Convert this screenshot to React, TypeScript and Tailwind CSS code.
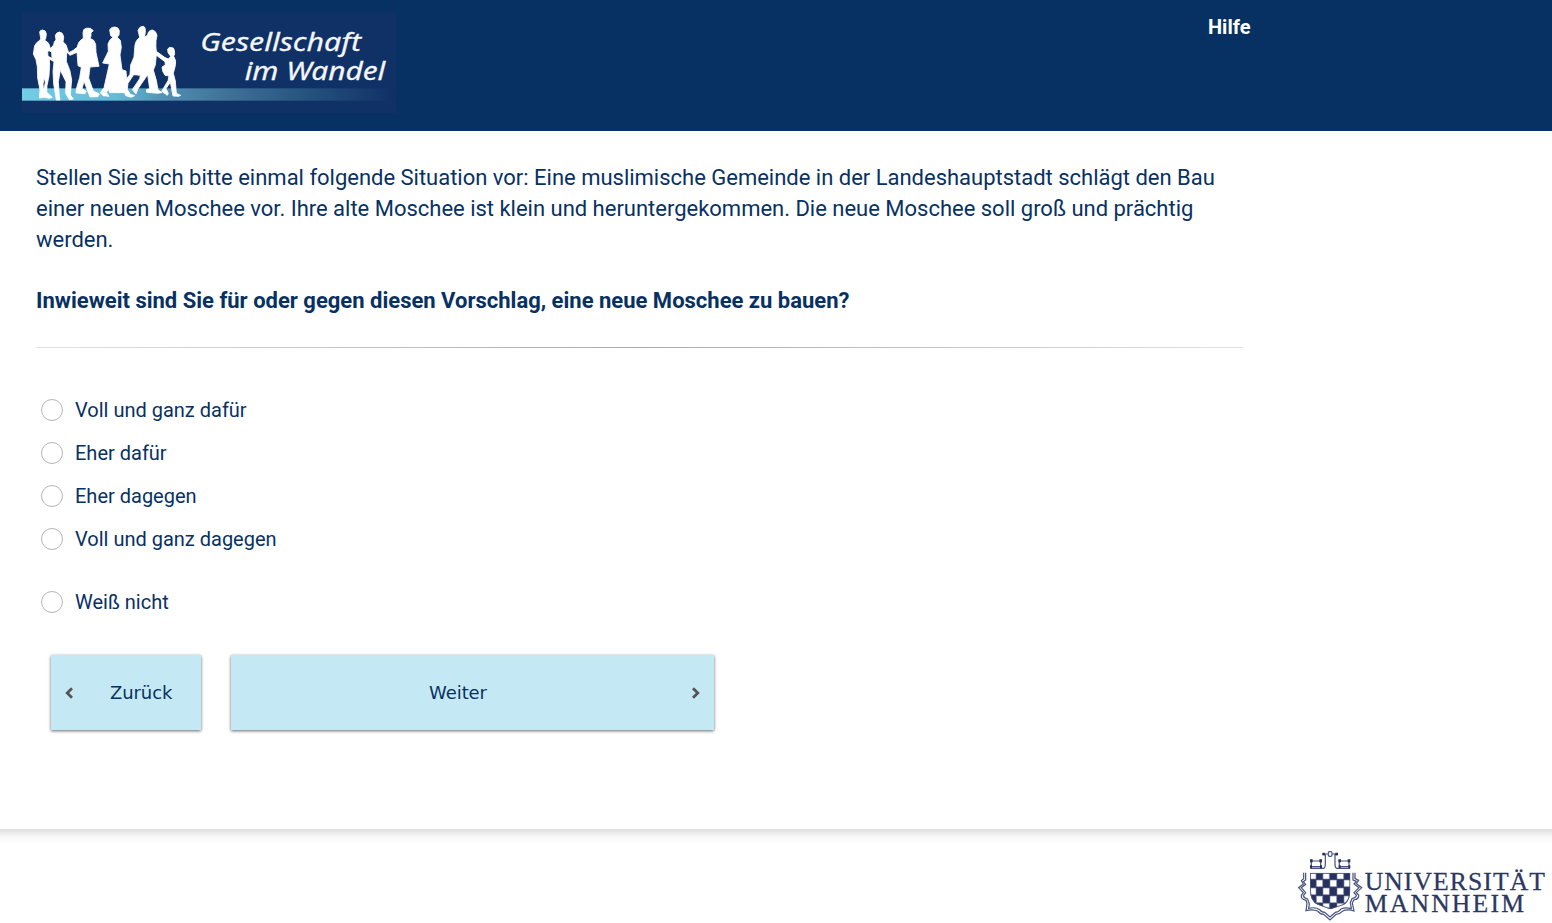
const options = ["Voll und ganz dafür", "Eher dafür", "Eher dagegen", "Voll und ganz dagegen"];

function PanelLogo() {
  return (
    <svg className="block h-[101px] w-[374px]" viewBox="36 6 1122 303" role="img" aria-label="Gesellschaft im Wandel">
      <defs>
        <linearGradient id="band" x1="0" x2="1">
          <stop offset="0" stopColor="#72cde5" />
          <stop offset="0.25" stopColor="#65bad6" />
          <stop offset="0.4" stopColor="#4f8caf" />
          <stop offset="0.55" stopColor="#3f7198" />
          <stop offset="0.78" stopColor="#24507c" />
          <stop offset="1" stopColor="#102f65" />
        </linearGradient>
      </defs>
      <rect x="36" y="6" width="1122" height="303" fill="#0f3166" />
      <rect x="36" y="235" width="1122" height="37" fill="url(#band)" />
      <g fill="#fff" stroke="#fff" strokeWidth="2.5" strokeLinejoin="round">
        <path d="M89 66 Q90 60 98 60 Q108 61 109 72 L107 86 L104 91 L112 96 Q119 101 120 115 L126 111 Q132 107 133 95 L138 90 L136 76 Q139 67 149 66 Q160 68 161 82 L159 96 L168 104 L176 128 L190 121 L202 111 Q204 94 220 85 L219 69 L221 59 Q228 52 241 55 L250 62 L243 68 L243 79 L240 85 L251 91 L257 103 L258 127 L267 169 L240 171 L236 204 L250 243 L268 252 L264 260 L240 261 L222 214 L216 236 L229 244 L225 251 L198 249 L200 233 L209 203 L214 172 L204 167 L201 127 L180 136 L170 126 L169 154 L180 183 L185 210 L181 255 L190 267 L178 269 L167 250 L168 215 L151 181 L145 215 L148 260 L150 270 L139 270 L131 222 L129 184 L132 155 L118 147 L119 166 L117 198 L111 227 L110 247 L127 262 L119 265 L102 262 L88 264 L90 240 L83 204 L82 170 L78 149 L70 132 L74 107 Q79 96 90 91 L92 85 Z M113 125 L114 139 L126 145 L125 126 L117 122 Z M103 203 L99 222 L101 244 L106 217 Z" fillRule="evenodd" />
        <path d="M299 59 Q304 50 315 51 Q326 52 328 62 L327 76 L321 81 L331 91 L334 112 L330 135 L336 179 L348 183 L350 206 L360 193 L362 165 L372 141 L374 114 Q375 92 389 82 L384 61 Q389 48 400 49 Q408 52 406 68 L403 82 L413 75 Q414 61 427 60 Q438 62 441 76 L438 92 Q437 111 439 124 L464 142 L475 147 L482 139 L474 128 L473 117 L479 112 L490 114 L493 121 L494 132 L491 139 Q500 151 496 167 L490 190 L496 213 L499 250 L512 256 L506 259 L489 258 L481 217 L468 236 L475 250 L472 256 L455 244 L474 212 L477 198 L465 196 Q456 185 456 171 L466 165 L465 155 L439 136 L436 165 L430 180 L439 211 L444 239 L456 248 L442 250 L410 247 L409 239 L419 236 L413 194 L383 238 L378 252 L367 239 L389 206 L391 196 L371 194 L354 220 L352 239 L361 253 L374 257 L364 262 L347 257 L344 248 L299 248 L296 238 L289 247 L297 259 L279 257 L271 248 L282 233 L298 162 L278 159 L295 124 L294 102 Q299 87 309 82 L302 77 Z" />
      </g>
      <g fill="#f4f6fa" stroke="#f4f6fa" strokeWidth="0.8" fontFamily="Noto Sans, sans-serif" fontStyle="italic" fontSize="77">
        <text x="571" y="124" textLength="482" lengthAdjust="spacingAndGlyphs">Gesellschaft</text>
        <text x="704" y="209" textLength="422" lengthAdjust="spacingAndGlyphs">im Wandel</text>
      </g>
    </svg>
  );
}

function UniversityLogo() {
  return (
    <svg className="block h-[78px] w-[262px]" viewBox="0 0 786 234" role="img" aria-label="Universität Mannheim">
      <defs>
        <clipPath id="shield">
          <path d="M60 83 H181 V130 Q181 174 157 181 L121 193 L84 179 Q60 172 60 130 Z" />
        </clipPath>
      </defs>
      <g clipPath="url(#shield)">
        <rect x="60" y="83" width="122" height="110" fill="#26315e" />
        <g fill="#fff" stroke="#7c84a3" strokeWidth="2">
          <path d="M60 84h18v18H60z M99 84h19v18H99z M141 84h20v18h-20z M79 105h19v20H79z M120 105h20v20h-20z M162 105h18v20h-18z M60 129h18v20H60z M99 129h19v20H99z M141 129h20v20h-20z M79 153h19v20H79z M120 153h20v20h-20z M162 153h18v20h-18z M99 175h19v14H99z M141 175h20v14h-20z" />
        </g>
        <path d="M60 84 H181 M60 83 V130 Q60 172 84 179 L121 193 L157 181 Q181 174 181 130 V83" fill="none" stroke="#48527d" strokeWidth="5" />
      </g>
      <g fill="none" stroke="#48527d" strokeWidth="3.6">
        <path d="M41 83 V101 L34 107 L40 117 L26 128 L40 143 L34 151 Q32 162 48 166 L51 176 L48 197 Q70 191 84 199 Q91 208 101 208 L120 225 L138 208 Q149 208 157 199 Q172 191 192 198 L187 174 L191 165 Q208 162 206 150 L199 143 L215 128 L199 116 L206 106 L195 101 V83" />
        <path d="M47 83 V105 L40 110 L47 118 L34 128 L47 143 L40 152 Q42 160 53 162 L58 177 L56 190 Q77 185 89 194 Q94 202 104 202 L120 216 L136 202 Q147 201 153 192 Q168 186 184 191 L181 173 L186 161 Q199 158 199 151 L192 143 L207 128 L192 117 L199 109 L189 105 V83" />
        <path d="M61 70 H101 Q106 68 106 57 V29 H98 M64 50 V65 H92 V50 M61 48 H94 M180 70 H140 Q135 68 135 57 V29 H143 M177 50 V65 H148 V50 M180 48 H147 M101 27 H114 M127 27 H141" />
        <rect x="115" y="20" width="11" height="14" rx="4" />
      </g>
      <g fill="#26315e">
        <path d="M60 43h8v9h-8z M88 43h8v9h-8z M145 43h8v9h-8z M173 43h8v9h-8z M97 23h8v8h-8z M136 23h8v8h-8z M60 61h6v9h-6z M90 61h6v9h-6z M146 61h6v9h-6z M175 61h6v9h-6z" />
      </g>
      <g fill="#2b3763" stroke="#2b3763" strokeWidth="0.8" fontFamily="Liberation Serif, serif" fontSize="77">
        <text x="224" y="134" textLength="541" lengthAdjust="spacing">UNIVERSITÄT</text>
        <text x="224" y="202" textLength="478" lengthAdjust="spacing">MANNHEIM</text>
      </g>
    </svg>
  );
}

function Chevron({ flip = false }: { flip?: boolean }) {
  return (
    <svg className={flip ? "size-3 rotate-180" : "size-3"} viewBox="0 0 12 12" fill="none" stroke="#555" strokeWidth="2.8">
      <path d="M9 1.2 4.2 6 9 10.8" />
    </svg>
  );
}

function Option({ label }: { label: string }) {
  return (
    <label className="flex h-[43px] items-center gap-3 pl-[5px] text-[20px]">
      <input type="radio" name="answer" className="size-[22px] appearance-none rounded-full border border-[#b5b5b5] bg-white" />
      {label}
    </label>
  );
}

export default function App() {
  return (
    <div className="flex h-[923px] flex-col overflow-hidden bg-white font-[Roboto,sans-serif] text-[#083163]">
      <header className="flex h-[131px] shrink-0 bg-[#083163] pt-3 pl-[22px] text-white">
        <PanelLogo />
        <a className="mt-px ml-[812px] text-[20px] leading-7 font-bold">Hilfe</a>
      </header>
      <main className="h-[698px] w-[1243px] shrink-0 pt-[31px] pl-9">
        <p className="text-[22px] leading-[31px] tracking-[-0.01px]">
          Stellen Sie sich bitte einmal folgende Situation vor: Eine muslimische Gemeinde in der Landeshauptstadt schlägt den Bau einer neuen Moschee vor. Ihre alte Moschee ist klein und heruntergekommen. Die neue Moschee soll groß und prächtig werden.
        </p>
        <p className="mt-[30px] text-[22px] leading-[31px] font-bold">
          Inwieweit sind Sie für oder gegen diesen Vorschlag, eine neue Moschee zu bauen?
        </p>
        <div className="mt-[31px] h-px bg-linear-to-r from-[#e2e2e2] via-[#aaa] to-[#e2e2e2]" />
        <div className="mt-10">
          {options.map((label) => (
            <Option key={label} label={label} />
          ))}
          <div className="mt-5">
            <Option label="Weiß nicht" />
          </div>
        </div>
        <div className="mt-8 flex gap-[30px] pl-[15px] font-[DejaVu_Sans,sans-serif] text-[18px]">
          <button className="flex h-[75px] w-[150px] items-center bg-[#c5e9f4] pl-3 shadow-[0_1px_3px_rgba(0,0,0,0.6)]">
            <Chevron />
            <span className="ml-[35px] tracking-[-0.1px]">Zurück</span>
          </button>
          <button className="flex h-[75px] w-[483px] items-center bg-[#c5e9f4] pr-3 shadow-[0_1px_3px_rgba(0,0,0,0.6)]">
            <span className="flex-1 pr-[5px] text-center tracking-[-0.1px]">Weiter</span>
            <Chevron flip />
          </button>
        </div>
      </main>
      <footer className="flex grow flex-col items-end">
        <div className="h-4 w-full shrink-0 bg-linear-to-b from-[#dedede] via-[#f8f8f8] to-white" />
        <UniversityLogo />
      </footer>
    </div>
  );
}
